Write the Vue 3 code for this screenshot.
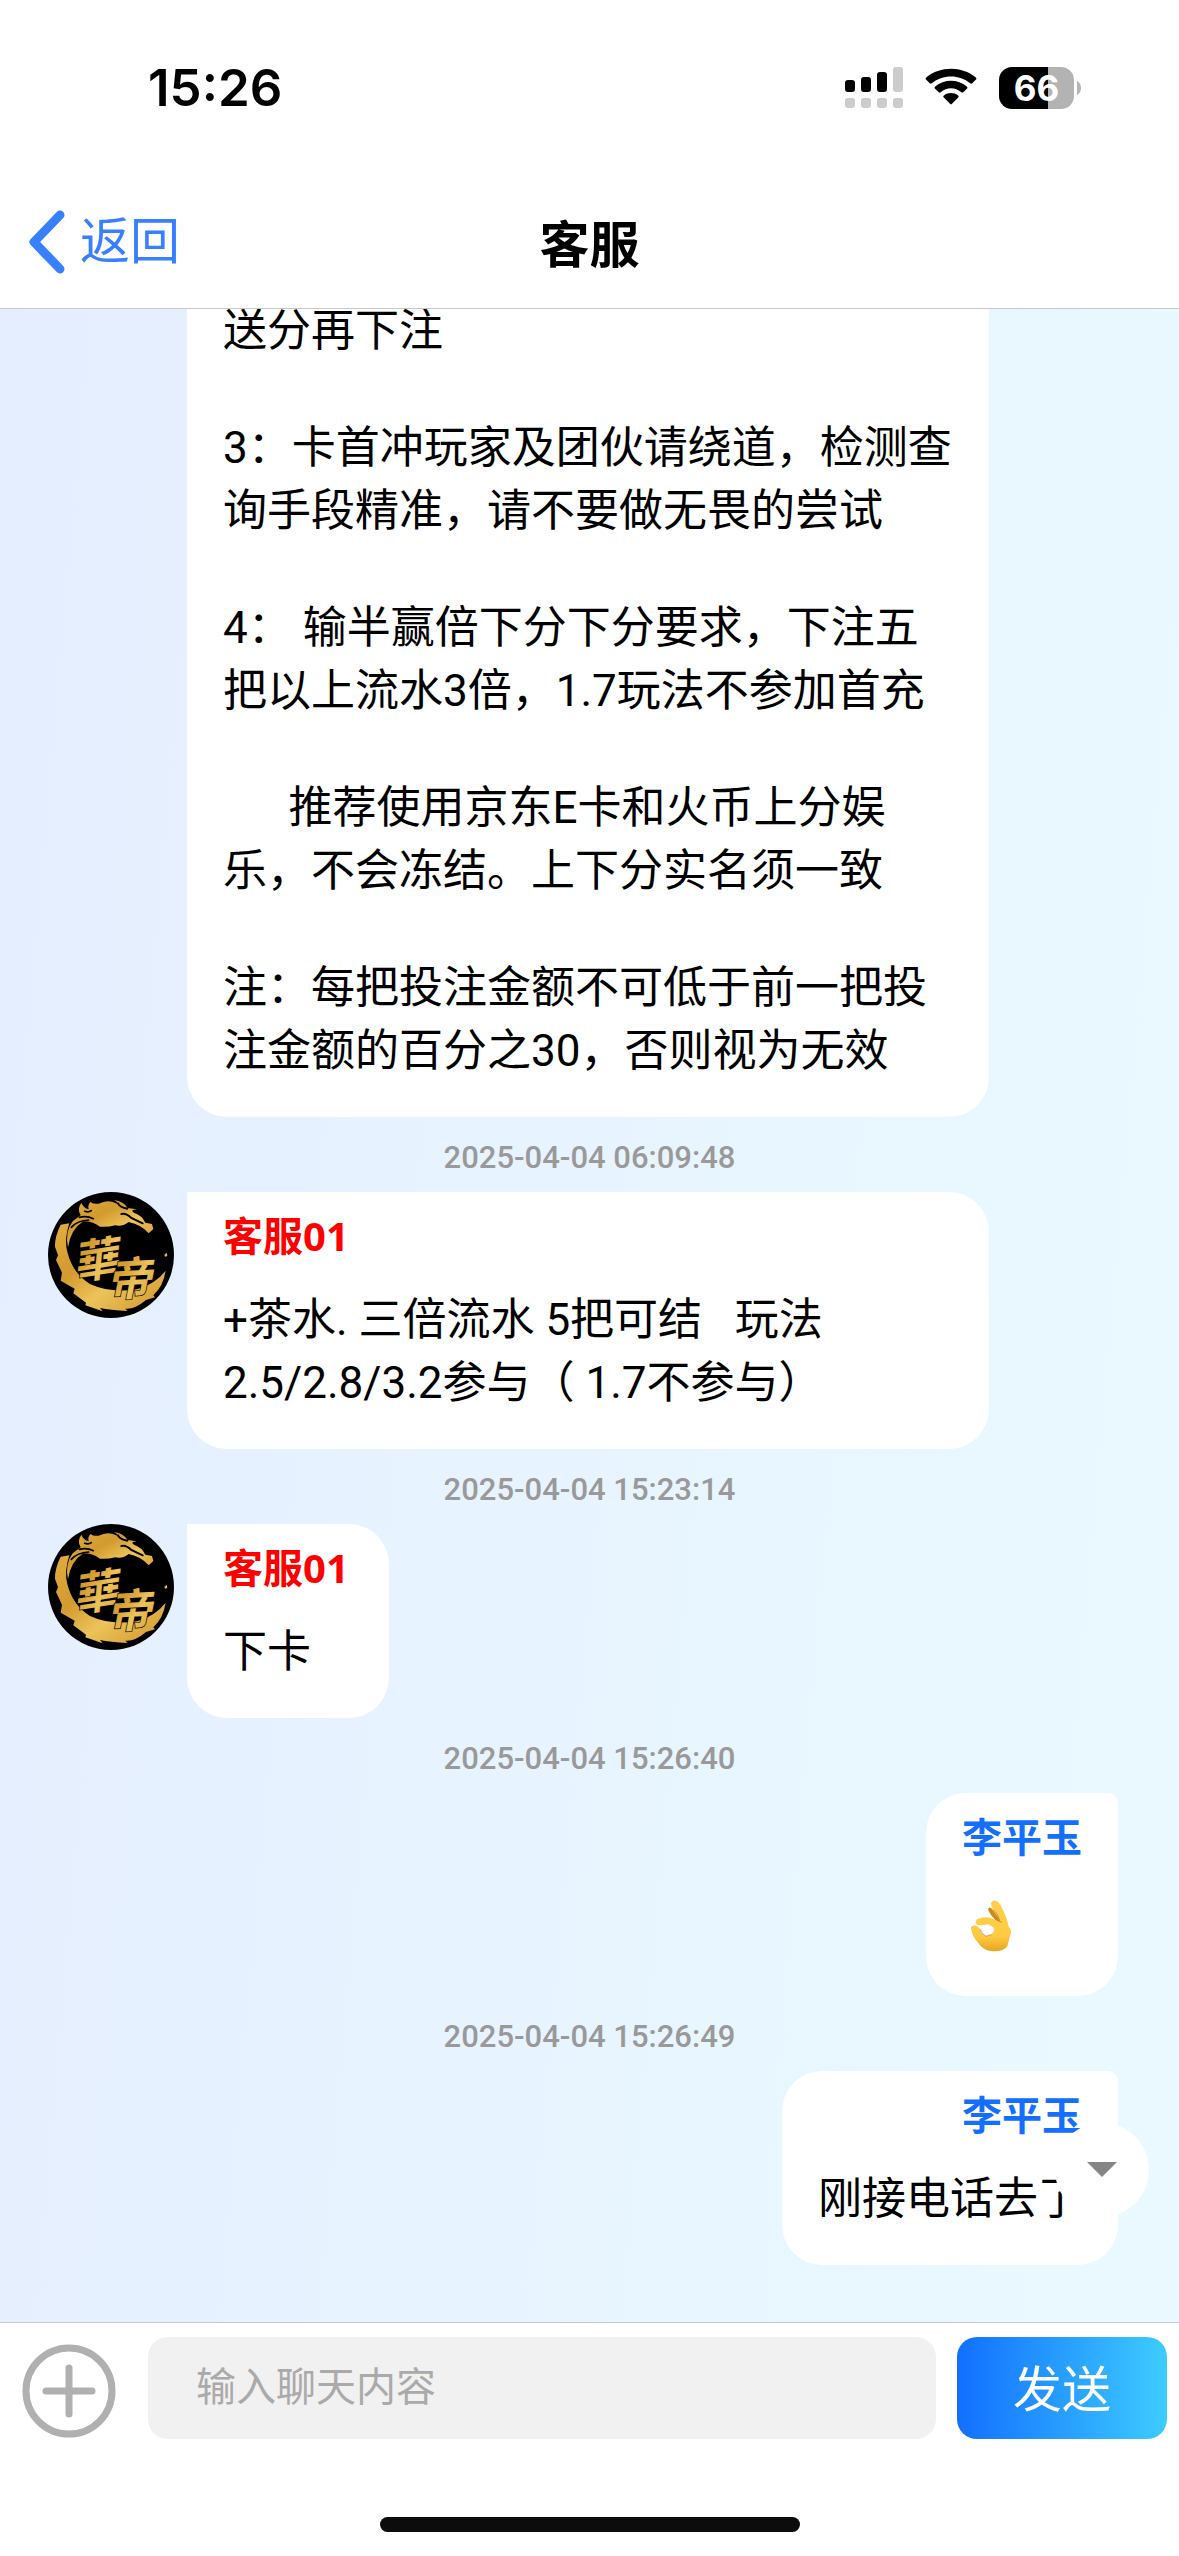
<script setup>
import { ref } from 'vue'

const draft = ref('')

const messages = [
  {
    id: 1,
    side: 'them',
    continued: true,
    paragraphs: [
      '送分再下注',
      '3：卡首冲玩家及团伙请绕道，检测查询手段精准，请不要做无畏的尝试',
      '4： 输半赢倍下分下分要求，下注五把以上流水3倍，1.7玩法不参加首充',
      '      推荐使用京东E卡和火币上分娱乐，不会冻结。上下分实名须一致',
      '注：每把投注金额不可低于前一把投注金额的百分之30，否则视为无效',
    ],
  },
  {
    id: 2,
    side: 'them',
    time: '2025-04-04 06:09:48',
    name: '客服01',
    paragraphs: ['+茶水. 三倍流水 5把可结   玩法2.5/2.8/3.2参与（ 1.7不参与）'],
  },
  { id: 3, side: 'them', time: '2025-04-04 15:23:14', name: '客服01', paragraphs: ['下卡'] },
  { id: 4, side: 'me', time: '2025-04-04 15:26:40', name: '李平玉', emoji: true },
  { id: 5, side: 'me', time: '2025-04-04 15:26:49', name: '李平玉', paragraphs: ['刚接电话去了'] },
]
</script>

<template>
  <div class="screen">
    <div class="status">
      <span class="clock">15:26</span>
      <div class="indicators">
        <svg width="58" height="42" viewBox="0 0 58 42" aria-hidden="true">
          <g fill="#000">
            <rect x="0" y="13" width="10" height="12" rx="3" />
            <rect x="16" y="10" width="10" height="15" rx="3" />
            <rect x="32" y="5" width="10" height="20" rx="3" />
          </g>
          <g fill="#ccc">
            <rect x="48" y="0" width="10" height="25" rx="3" />
            <rect x="0" y="31" width="10" height="10" rx="3" />
            <rect x="16" y="31" width="10" height="10" rx="3" />
            <rect x="32" y="31" width="10" height="10" rx="3" />
            <rect x="48" y="31" width="10" height="10" rx="3" />
          </g>
        </svg>
        <svg width="52" height="42" viewBox="0 0 52 42" aria-hidden="true">
          <path d="M1 12.500Q0 11.500 1.500 10.300C15-1.200 37-1.200 50.500 10.300Q52 11.500 51 12.500L47.200 16.300Q46.300 17.200 45.200 16.300C34.500 7.200 17.500 7.200 6.800 16.300Q5.700 17.200 4.800 16.300Z" />
          <path d="M9.800 21.400Q9 20.500 10.200 19.400C19 11.800 33 11.800 41.800 19.400Q43 20.500 42.200 21.400L38.200 25.300Q37.300 26.100 36.300 25.300C30 20 22 20 15.700 25.300Q14.700 26.100 13.800 25.300Z" />
          <path d="M18.600 30.300Q17.700 29.400 18.900 28.400C23.200 25.200 28.800 25.200 33.100 28.400Q34.300 29.400 33.400 30.300L27 36.700Q26 37.700 25 36.700Z" />
        </svg>
        <div class="battery">
          <span class="charge">66</span>
          <svg width="5" height="14" viewBox="0 0 5 14" aria-hidden="true">
            <path d="M0 0Q4 2 4 7T0 14Z" fill="#b3b3b3" />
          </svg>
        </div>
      </div>
    </div>

    <header class="nav">
      <button class="back" type="button">
        <svg width="38" height="66" viewBox="0 0 38 66" aria-hidden="true">
          <path d="M32 6L6 33L32 60" fill="none" stroke="#3880ff" stroke-width="9" stroke-linecap="round" stroke-linejoin="round" />
        </svg>
        <span>返回</span>
      </button>
      <h1>客服</h1>
    </header>

    <main class="chat">
      <template v-for="m in messages" :key="m.id">
        <time v-if="m.time" class="stamp">{{ m.time }}</time>
        <div class="row" :class="m.side">
          <svg v-if="m.side === 'them' && !m.continued" class="avatar" viewBox="24 36 378 378" role="img" aria-label="客服头像">
            <defs>
              <linearGradient :id="'gold' + m.id" x1="0" y1="0" x2="1" y2="1">
                <stop offset="0" stop-color="#e2ad3e" />
                <stop offset=".35" stop-color="#d39a2f" />
                <stop offset=".6" stop-color="#ecc35a" />
                <stop offset="1" stop-color="#cf942b" />
              </linearGradient>
            </defs>
            <circle cx="213" cy="225" r="189" fill="#000" />
            <g :fill="`url(#gold${m.id})`">
              <path d="M62 134L88 130Q72 180 82 216Q98 280 150 312Q210 340 290 328Q344 314 377 272Q370 318 340 346L345 352L318 360Q286 388 256 386L262 393Q210 390 180 384L188 394L136 376L138 368L100 340L104 326L62 302L66 278L48 240L54 226L45 200Q44 170 62 134Z" />
              <path d="M84 202Q74 156 98 124L122 106Q110 88 124 68Q130 84 146 88Q142 74 152 66Q164 76 184 68Q206 58 228 70L242 78Q226 60 222 60Q252 64 262 84L290 88Q268 90 282 98Q306 106 316 128L336 132L340 147L326 160Q304 134 266 126Q250 140 226 136Q202 142 180 140Q158 124 130 124Q92 148 84 202Z" />
              <path d="M373 224L380 218L382 228L375 230Z" />
            </g>
            <g fill="none" stroke="#000" stroke-linecap="round">
              <path d="M94 142Q112 122 146 120M118 112Q140 106 160 116M134 94Q146 98 154 92" stroke-width="5" />
              <path d="M244 102Q258 98 274 114L308 130M234 70Q240 82 262 86" stroke-width="6" />
            </g>
            <g class="seal" :fill="`url(#gold${m.id})`">
              <text x="96" y="290" transform="rotate(-9 164 240)">華</text>
              <text x="198" y="346" transform="rotate(-3 268 290)">帝</text>
            </g>
          </svg>
          <article class="bubble" :class="{ continued: m.continued }">
            <h2 v-if="m.name">{{ m.name }}</h2>
            <p v-for="(text, i) in m.paragraphs" :key="i">{{ text }}</p>
            <div v-if="m.emoji" class="emoji">
              <svg width="44" height="54" viewBox="0 0 132 162" role="img" aria-label="OK">
                <defs>
                  <linearGradient id="hand" x1="0" y1="0" x2="0" y2="1">
                    <stop offset="0" stop-color="#ffd04c" />
                    <stop offset=".7" stop-color="#ffcb42" />
                    <stop offset="1" stop-color="#e8a423" />
                  </linearGradient>
                </defs>
                <path d="M55 28Q60 22 68 32L96 68L86 72Q62 52 55 34Z" fill="#d08a1c" />
                <path d="M64 10Q72 0 84 8Q92 16 102 40Q114 66 116 84Q126 90 122 104L112 142Q102 158 68 157Q38 154 22 128Q6 112 3 88Q2 80 10 80Q22 78 31 92Q32 106 48 112Q68 108 73 94Q74 84 54 76Q36 80 22 78Q12 70 22 60Q44 50 64 58L88 68Q86 52 74 38Q60 20 64 10Z" fill="url(#hand)" />
                <path d="M90 68L84 50Q78 40 70 32M86 66L96 70M31 92Q34 106 48 112Q56 108 64 108" fill="none" stroke="#b97516" stroke-width="2" />
              </svg>
            </div>
          </article>
        </div>
      </template>
      <button class="floater" type="button" aria-label="展开">
        <svg width="30" height="16" viewBox="0 0 30 16" aria-hidden="true"><path d="M0 0H30L15 15Z" fill="#858585" /></svg>
      </button>
    </main>

    <footer class="dock">
      <form class="composer" @submit.prevent>
        <button class="add" type="button" aria-label="更多">
          <svg width="94" height="94" viewBox="0 0 94 94" fill="none" stroke="#b0b0b0" stroke-width="7" aria-hidden="true">
            <circle cx="47" cy="47" r="43" />
            <path d="M47 24V70M24 47H70" stroke-linecap="round" />
          </svg>
        </button>
        <input v-model="draft" type="text" aria-label="聊天内容" placeholder="输入聊天内容" />
        <button class="send" type="submit">发送</button>
      </form>
      <div class="home"></div>
    </footer>
  </div>
</template>

<style>
body {
  margin: 0;
}
</style>

<style scoped>
* {
  box-sizing: border-box;
}
.screen {
  display: flex;
  flex-direction: column;
  height: 100vh;
  background: #fff;
  color: #000;
  font-family: Roboto, "Noto Sans CJK SC", sans-serif;
}
button,
input {
  border: 0;
  padding: 0;
  background: none;
  font-family: inherit;
}
svg {
  display: block;
}
.status {
  flex: none;
  display: flex;
  align-items: center;
  justify-content: space-between;
  height: 176px;
  padding: 0 97px 0 148px;
}
.clock {
  font: 600 51px/60px Inter, sans-serif;
}
.indicators {
  display: flex;
  align-items: center;
  gap: 22px;
}
.battery {
  display: flex;
  align-items: center;
  gap: 3px;
}
.charge {
  width: 75px;
  border-radius: 13px;
  background: linear-gradient(90deg, #000 66%, #b3b3b3 66%);
  color: #fff;
  font: 700 35px/42px Inter, sans-serif;
  text-align: center;
}
.nav {
  flex: none;
  display: grid;
  grid-template-columns: 1fr auto 1fr;
  align-items: center;
  height: 133px;
  padding: 0 28px;
  border-bottom: 1px solid #c8c8ca;
}
.back {
  display: flex;
  align-items: center;
  gap: 14px;
  color: #3880ff;
  font-size: 50px;
  line-height: 66px;
}
h1 {
  margin: 0;
  padding-top: 8px;
  font-size: 50px;
  line-height: 66px;
}
.chat {
  position: relative;
  flex: 1;
  min-height: 0;
  display: flex;
  flex-direction: column;
  justify-content: flex-end;
  overflow: hidden;
  padding-bottom: 57px;
  background: linear-gradient(95deg, #e5eeff 0%, #e9f9ff 90%);
}
.stamp {
  flex: none;
  padding-top: 6px;
  color: #999;
  font-size: 31px;
  font-weight: 500;
  line-height: 69px;
  text-align: center;
}
.row {
  flex: none;
  display: flex;
  align-items: flex-start;
  gap: 13px;
  padding: 0 61px 0 48px;
}
.row.me {
  justify-content: flex-end;
}
.avatar {
  flex: none;
  width: 126px;
  height: 126px;
}
.seal {
  stroke: #000;
  stroke-width: 4px;
  paint-order: stroke;
  font: italic 700 136px "Noto Sans CJK TC", sans-serif;
}
.bubble {
  min-width: 202px;
  max-width: 68vw;
  padding: 18px 35px 34px 36px;
  border-radius: 0 40px 40px 40px;
  background: #fff;
  font-size: 44px;
  line-height: 63px;
}
.bubble.continued {
  margin-left: 139px;
  padding-top: 0;
  border-radius: 0 0 40px 40px;
}
.me .bubble {
  min-width: 0;
  padding-right: 36px;
  border-radius: 40px 10px 40px 40px;
}
h2 {
  margin: 0 0 27px;
  color: #f00;
  font-family: "Noto Sans", "Noto Sans CJK SC", sans-serif;
  font-size: 40px;
  line-height: 52px;
}
.me h2 {
  color: #146eff;
  text-align: right;
}
p {
  margin: 0;
  white-space: pre-wrap;
}
p + p {
  margin-top: 54px;
}
.emoji {
  display: flex;
  align-items: center;
  height: 72px;
  padding-left: 8px;
}
.floater {
  position: absolute;
  right: 30px;
  bottom: 105px;
  display: flex;
  align-items: center;
  justify-content: center;
  width: 94px;
  height: 94px;
  border-radius: 50%;
  background: #fff;
}
.dock {
  flex: none;
  padding-bottom: 24px;
  border-top: 1px solid #c6cbd0;
}
.composer {
  display: flex;
  align-items: center;
  padding: 14px 12px 0 22px;
}
.add {
  padding-top: 6px;
}
.composer input {
  flex: 1;
  min-width: 0;
  height: 102px;
  margin: 0 21px 0 32px;
  padding: 0 48px 2px;
  border-radius: 20px;
  background: #f1f1f1;
  color: #000;
  font-size: 40px;
}
.composer input::placeholder {
  color: #aaa;
  opacity: 1;
}
.send {
  width: 210px;
  height: 102px;
  padding-bottom: 6px;
  border-radius: 20px;
  background: linear-gradient(90deg, #126fff, #3dccff);
  color: #fff;
  font-size: 49px;
}
.home {
  width: 420px;
  height: 15px;
  margin: 78px auto 0;
  border-radius: 8px;
  background: #0c0c0c;
}
</style>
